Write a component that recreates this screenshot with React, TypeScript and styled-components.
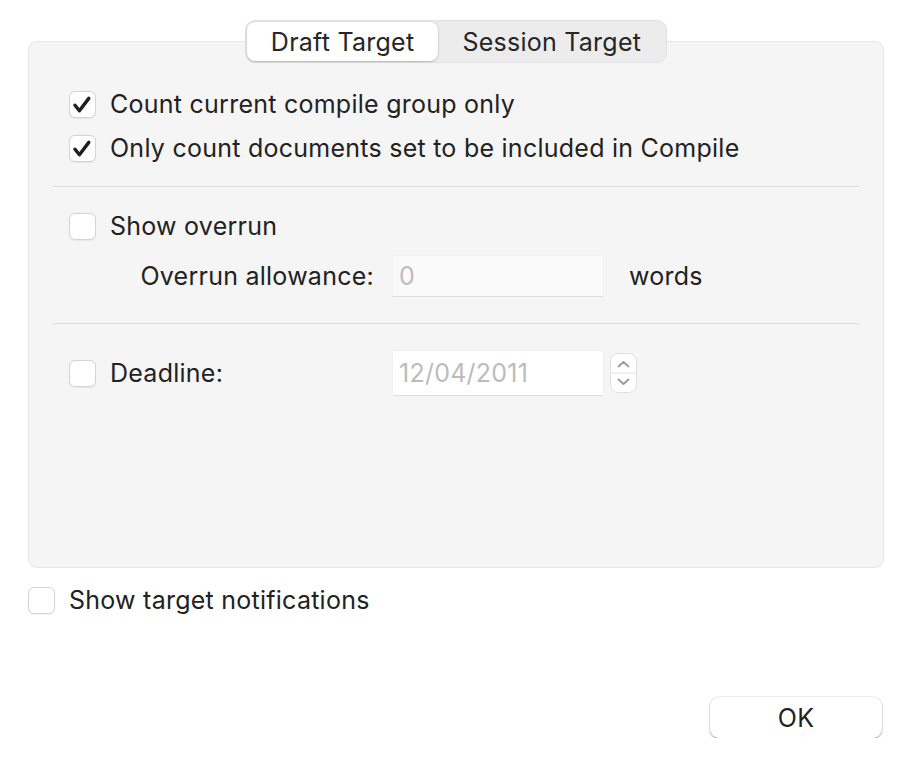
import React from "react";
import styled, { createGlobalStyle } from "styled-components";

const GlobalStyle = createGlobalStyle`
  html, body {
    margin: 0;
    padding: 0;
    background: #ffffff;
  }
  body {
    font-family: "Inter", "Liberation Sans", sans-serif;
    color: #222222;
  }
`;

const CheckBox = ({ checked }: { checked?: boolean }) => (
  <Box>
    {checked && (
      <svg width="27" height="27" viewBox="0 0 27 27">
        <path
          d="M6 14.2 L10.4 19.8 L19.8 7.4"
          fill="none"
          stroke="#1f1f1f"
          strokeWidth="3.4"
          strokeLinecap="round"
          strokeLinejoin="round"
        />
      </svg>
    )}
  </Box>
);

const App = () => {
  return (
    <Page>
      <GlobalStyle />
      <Tabs>
        <Segment $active>Draft Target</Segment>
        <Segment>Session Target</Segment>
      </Tabs>
      <Panel>
        <CheckRow $top={-1}>
          <CheckBox checked />
          <span>Count current compile group only</span>
        </CheckRow>
        <CheckRow>
          <CheckBox checked />
          <span>Only count documents set to be included in Compile</span>
        </CheckRow>
        <Divider $top={16} />
        <CheckRow $top={17}>
          <CheckBox />
          <span>Show overrun</span>
        </CheckRow>
        <FieldRow $top={8}>
          <FieldLabel>Overrun allowance:</FieldLabel>
          <Field $tone="#fafafa">0</Field>
          <Unit>words</Unit>
        </FieldRow>
        <Divider $top={27} />
        <FieldRow $top={27}>
          <DeadlineCell>
            <CheckBox />
            <span>Deadline:</span>
          </DeadlineCell>
          <Field $tone="#ffffff" $h={44}>
            12/04/2011
          </Field>
          <Stepper>
            <svg width="27" height="40" viewBox="0 0 27 40">
              <path
                d="M8.5 13.5 L13.5 9 L18.5 13.5"
                fill="none"
                stroke="#9a9a9a"
                strokeWidth="1.8"
                strokeLinecap="round"
                strokeLinejoin="round"
              />
              <line x1="1" y1="20" x2="26" y2="20" stroke="#e2e2e2" strokeWidth="1" />
              <path
                d="M8.5 26.5 L13.5 31 L18.5 26.5"
                fill="none"
                stroke="#9a9a9a"
                strokeWidth="1.8"
                strokeLinecap="round"
                strokeLinejoin="round"
              />
            </svg>
          </Stepper>
        </FieldRow>
      </Panel>
      <NotifyRow>
        <CheckBox />
        <span>Show target notifications</span>
      </NotifyRow>
      <Footer>
        <Button>OK</Button>
      </Footer>
    </Page>
  );
};

const Page = styled.div`
  padding: 20px 24px 0 28px;
  display: flex;
  flex-direction: column;
  font-size: 25px;
  letter-spacing: 0.25px;
`;

const Tabs = styled.div`
  align-self: center;
  display: flex;
  height: 43px;
  box-sizing: border-box;
  padding: 1px;
  background: #ececec;
  border: 1px solid #e2e2e2;
  border-radius: 10px;
  position: relative;
  z-index: 1;
`;

const Segment = styled.div<{ $active?: boolean }>`
  display: flex;
  align-items: center;
  padding: 0 24px;
  border-radius: 8px;
  color: #262626;
  background: ${(p) => (p.$active ? "#ffffff" : "transparent")};
  box-shadow: ${(p) =>
    p.$active ? "0 1px 2px rgba(0,0,0,0.2), 0 0 0 0.5px rgba(0,0,0,0.08)" : "none"};
`;

const Panel = styled.div`
  margin-top: -22px;
  height: 527px;
  box-sizing: border-box;
  padding: 41px 24px 0 40px;
  background: #f5f5f5;
  border: 1px solid #e6e6e6;
  border-radius: 9px;
  display: flex;
  flex-direction: column;
`;

const Box = styled.div`
  width: 27px;
  height: 27px;
  box-sizing: border-box;
  flex-shrink: 0;
  background: #ffffff;
  border: 1px solid #d4d4d4;
  border-radius: 6px;
  box-shadow: 0 0.5px 1px rgba(0, 0, 0, 0.06);
  display: flex;
  align-items: center;
  justify-content: center;
  margin-right: 14px;

  svg {
    flex-shrink: 0;
  }
`;

const CheckRow = styled.div<{ $top?: number }>`
  display: flex;
  align-items: center;
  height: 44px;
  margin-top: ${(p) => p.$top ?? 0}px;
`;

const Divider = styled.div<{ $top: number }>`
  height: 1px;
  background: #dcdcdc;
  margin: ${(p) => p.$top}px 0 0 -16px;
`;

const FieldRow = styled.div<{ $top?: number }>`
  display: flex;
  align-items: center;
  margin-top: ${(p) => p.$top ?? 0}px;
`;

const FieldLabel = styled.div`
  width: 305px;
  text-align: right;
  margin-right: 19px;
`;

const DeadlineCell = styled.div`
  width: 324px;
  display: flex;
  align-items: center;
`;

const Field = styled.div<{ $tone: string; $h?: number }>`
  width: 210px;
  height: ${(p) => p.$h ?? 40}px;
  box-sizing: border-box;
  padding: 0 6px;
  display: flex;
  align-items: center;
  color: #bcbcbc;
  background: ${(p) => p.$tone};
  box-shadow: 0 1px 0 #dddddd, 0 0 0 0.5px #ececec;
`;

const Unit = styled.div`
  margin-left: 26px;
`;

const Stepper = styled.div`
  margin-left: 7px;
  width: 27px;
  height: 40px;
  background: #ffffff;
  border: 1px solid #e0e0e0;
  border-radius: 8px;
  box-sizing: border-box;
  display: flex;
  align-items: center;
  justify-content: center;
  overflow: hidden;

  svg {
    flex-shrink: 0;
  }
`;

const NotifyRow = styled.div`
  display: flex;
  align-items: center;
  height: 44px;
  margin-top: 10px;
`;

const Footer = styled.div`
  display: flex;
  justify-content: flex-end;
  margin-top: 75px;
  padding-right: 2px;
`;

const Button = styled.button`
  width: 172px;
  height: 41px;
  border: none;
  border-radius: 9px;
  background: #ffffff;
  font-family: inherit;
  font-size: 25px;
  letter-spacing: 0.25px;
  color: #222222;
  box-shadow: 0 1px 2px rgba(0, 0, 0, 0.3), 0 0 0 0.5px rgba(0, 0, 0, 0.12);
`;

export default App;
